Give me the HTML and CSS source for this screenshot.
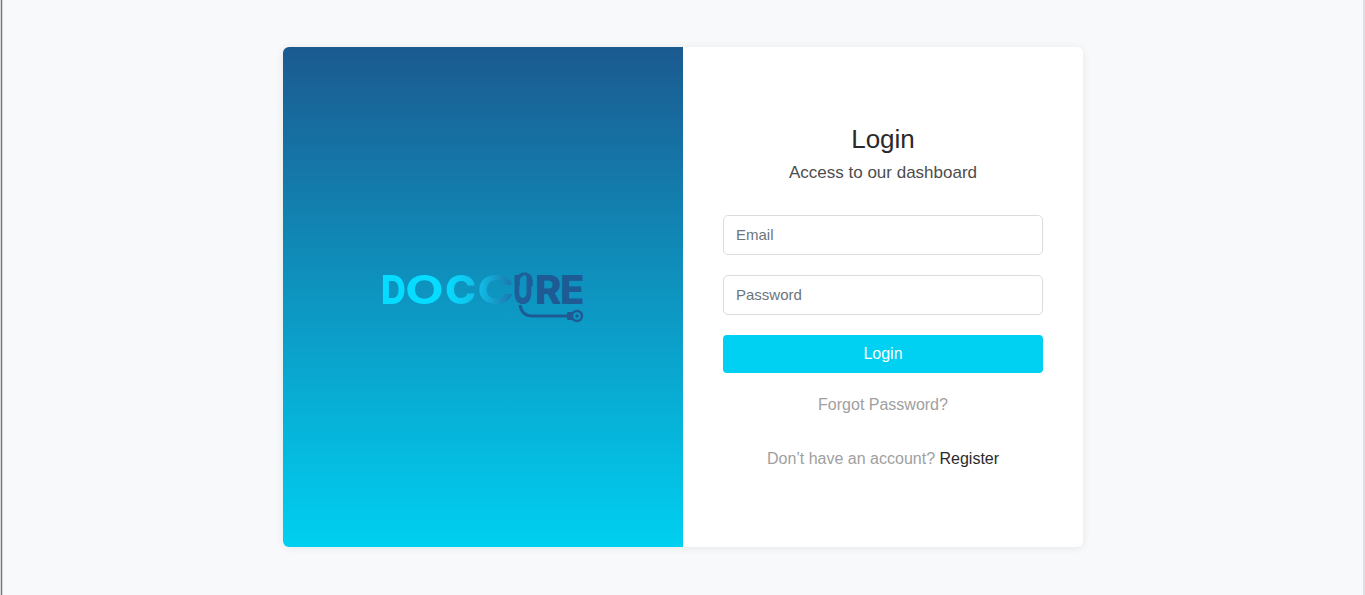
FILE: index.html
```html
<!DOCTYPE html>
<html lang="en">
<head>
  <meta charset="UTF-8" />
  <meta name="viewport" content="width=device-width, initial-scale=1.0"/>
  <title>Doccure - Login</title>
  <link rel="stylesheet" href="styles.css">
</head>
<body>
  <div class="window-edge"></div>
  <div class="page">
    <div class="login-card">
      <div class="login-left">
        <div class="logo">
          <div class="logo-text"><span class="l-d">D</span><span class="l-o">O</span><span class="l-c1">C</span><span class="l-c2">C</span><span class="l-u">U</span><span class="l-r">R</span><span class="l-e">E</span></div>
          <svg class="logo-steth" width="204" height="56" viewBox="0 0 204 56" fill="none">
            <path d="M136 16Q135 7 141 5M149 16Q150 7 144 5" stroke="#1f5e98" stroke-width="3.4" stroke-linecap="round"/>
            <path d="M138 36Q140 47 150 47H186" stroke="#1f5a94" stroke-width="3"/>
            <rect x="185" y="43" width="6" height="8" rx="1" fill="#1f5a94"/>
            <circle cx="195" cy="47" r="5" stroke="#1f5a94" stroke-width="2.4"/>
            <circle cx="195" cy="47" r="1.8" fill="#1f5a94"/>
          </svg>
        </div>
      </div>
      <div class="login-right">
        <h1>Login</h1>
        <p class="account-subtitle">Access to our dashboard</p>
        <form class="login-form">
          <input class="form-control" type="text" placeholder="Email" />
          <input class="form-control" type="text" placeholder="Password" />
          <button class="btn-login" type="button">Login</button>
        </form>
        <a class="forgot" href="#">Forgot Password?</a>
        <div class="register">Don’t have an account? <a href="#">Register</a></div>
      </div>
    </div>
  </div>
</body>
</html>
```

FILE: styles.css
```css
* {
  box-sizing: border-box;
}

html, body {
  height: 100%;
}

body {
  margin: 0;
  display: flex;
  background-color: #f8f9fa;
  border-right: 2px solid #dfe0e6;
  font-family: "Liberation Sans", Arial, sans-serif;
  font-size: 16px;
  line-height: 1.5;
  color: #2a2a2a;
  overflow: hidden;
}

.window-edge {
  flex: 0 0 3px;
  background: linear-gradient(90deg, #d8d8d8 1px, #77777b 1px, #77777b 2px, #d8d8d8 2px);
}

.page {
  flex: 1;
  display: flex;
  justify-content: center;
  padding-top: 47px;
}

.login-card {
  display: flex;
  width: 800px;
  height: 500px;
  background-color: #fff;
  border-radius: 6px;
  box-shadow: 0 1px 8px rgba(0, 0, 0, 0.08);
  overflow: hidden;
}

.login-left {
  width: 400px;
  background: linear-gradient(180deg, #1b5a90, #00d0f1);
  display: flex;
  align-items: center;
  justify-content: center;
}

.logo {
  position: relative;
  width: 204px;
  height: 56px;
  margin-left: 2px;
  margin-top: 3px;
}

.logo-text {
  display: flex;
  font-family: Inter, sans-serif;
  font-size: 40px;
  font-weight: 800;
  line-height: 56px;
  height: 48px;
  margin-top: -9px;
}

.logo-text span {
  display: block;
  transform-origin: 0 50%;
}

.l-d, .l-o {
  color: #06dcff;
}

.l-d {
  width: 24px;
  margin-left: -1px;
  transform: scaleX(0.86);
}

.l-o {
  width: 40px;
  font-weight: 700;
  transform: scaleX(1.26);
}

.l-c1, .l-c2 {
  -webkit-background-clip: text;
  background-clip: text;
  color: transparent;
}

.l-c1 {
  width: 32px;
  background-image: linear-gradient(90deg, #06dcff, #13bce6);
  transform: scaleX(1.05);
}

.l-c2 {
  width: 36px;
  font-weight: 700;
  background-image: linear-gradient(90deg, #12b8e2 10%, #1d6aa3 90%);
  transform: scaleX(1.25);
}

.l-u {
  color: #1f5e98;
  width: 22px;
  transform: scaleX(0.68);
}

.l-r {
  color: #1e5a94;
  width: 25px;
}

.l-e {
  color: #1e5a94;
  width: 22px;
}

.logo-steth {
  position: absolute;
  left: 0;
  top: -2px;
}

.login-right {
  width: 400px;
  padding: 77px 40px 0;
  text-align: center;
}

h1 {
  margin: 0 0 5px;
  font-size: 26px;
  font-weight: 500;
  line-height: 31px;
  color: #2a2a2a;
}

.account-subtitle {
  margin: 0 0 30px;
  font-size: 17px;
  line-height: 25px;
  color: #4d4d4d;
}

.form-control {
  display: block;
  width: 100%;
  height: 40px;
  margin-bottom: 20px;
  padding: 6px 12px 8px;
  border: 1px solid #dcdcdc;
  border-radius: 5px;
  background-color: #fff;
  font-family: inherit;
  font-size: 15px;
  color: #333;
  outline: none;
}

.form-control::placeholder {
  color: #6c757d;
  opacity: 1;
}

.btn-login {
  display: block;
  width: 100%;
  height: 38px;
  border: none;
  border-radius: 4px;
  background-color: #00d0f1;
  color: #fff;
  font-family: inherit;
  font-size: 16px;
  cursor: pointer;
}

.forgot {
  display: block;
  margin-top: 20px;
  color: #a0a0a0;
  text-decoration: none;
}

.register {
  margin-top: 30px;
  color: #a0a0a0;
}

.register a {
  color: #2a2a2a;
  text-decoration: none;
}
```
